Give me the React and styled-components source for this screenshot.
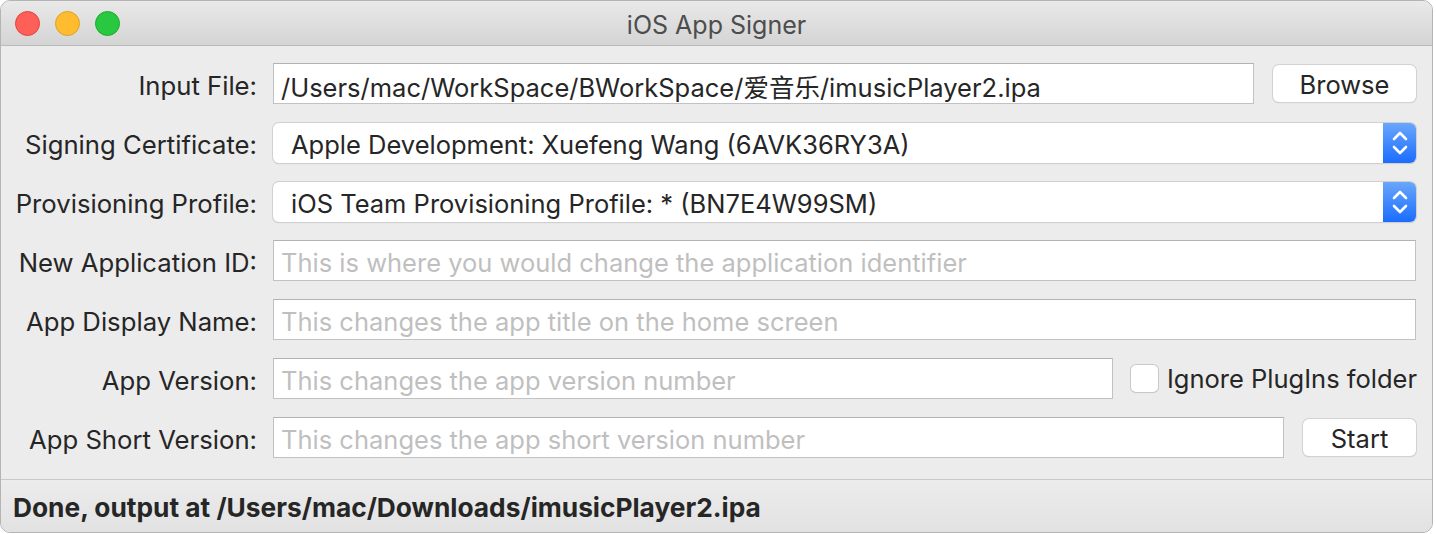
import styled, { createGlobalStyle } from "styled-components";

const GlobalStyle = createGlobalStyle`
  html, body {
    margin: 0;
    padding: 0;
    background: #ffffff;
  }
  * { box-sizing: border-box; }
`;

const FONT = `Inter, "Noto Sans", "Noto Sans CJK SC", sans-serif`;

const Window = styled.div`
  width: 1433px;
  height: 533px;
  border: 1px solid #b4b4b4;
  border-radius: 10px;
  overflow: hidden;
  background: #ececec;
  display: flex;
  flex-direction: column;
  font-family: ${FONT};
  color: #262626;
`;

const TitleBar = styled.div`
  height: 45px;
  flex-shrink: 0;
  display: flex;
  align-items: center;
  position: relative;
  background: linear-gradient(#e9e9e9, #d4d4d4);
  border-bottom: 1px solid #b9b9b9;
`;

const Lights = styled.div`
  display: flex;
  gap: 15px;
  padding-left: 14px;
`;

const Light = styled.span`
  width: 25px;
  height: 25px;
  border-radius: 50%;
  background: ${(p) => p.$bg};
  border: 1px solid ${(p) => p.$edge};
`;

const Title = styled.div`
  position: absolute;
  left: 0;
  right: 0;
  top: 9px;
  text-align: center;
  font-size: 25px;
  color: #4d4d4d;
  pointer-events: none;
`;

const Form = styled.div`
  flex: 1;
  display: flex;
  flex-direction: column;
  gap: 18px;
  padding: 17px 16px 0 0;
`;

const Row = styled.div`
  display: flex;
  align-items: center;
  height: 41px;
`;

const Label = styled.div`
  width: 256px;
  flex-shrink: 0;
  text-align: right;
  font-size: 25.7px;
  padding-top: 3px;
  margin-right: 16px;
  white-space: nowrap;
`;

const Field = styled.div`
  flex: ${(p) => (p.$width ? "none" : "1")};
  width: ${(p) => (p.$width ? p.$width + "px" : "auto")};
  height: 41px;
  background: #fff;
  border: 1px solid #c2c2c2;
  border-top-color: #b2b2b2;
  display: flex;
  align-items: center;
  padding: 3px 0 0 7px;
  font-size: 25.5px;
  white-space: nowrap;
  overflow: hidden;
  color: ${(p) => (p.$placeholder ? "#bfbfbf" : "#262626")};
`;

const Popup = styled.div`
  flex: 1;
  height: 40px;
  display: flex;
  background: #fff;
  border-radius: 6px;
  box-shadow: 0 0 0 1px #d0d0d0, 0 1px 1px rgba(0, 0, 0, 0.22);
  overflow: hidden;
`;

const PopupText = styled.div`
  flex: 1;
  display: flex;
  align-items: center;
  padding: 3px 0 0 18px;
  font-size: 25.5px;
  white-space: nowrap;
`;

const Stepper = styled.div`
  width: 33px;
  display: flex;
  align-items: center;
  justify-content: center;
  background: linear-gradient(#6aa6fb, #1a6dfd);
`;

const Button = styled.div`
  width: ${(p) => p.$width}px;
  height: 37px;
  margin-left: ${(p) => p.$gap}px;
  flex-shrink: 0;
  background: #fff;
  border-radius: 6px;
  box-shadow: 0 0 0 1px #d2d2d2, 0 1px 1px rgba(0, 0, 0, 0.22);
  display: flex;
  align-items: center;
  justify-content: center;
  padding-top: 2px;
  font-size: 25.5px;
`;

const Check = styled.label`
  display: flex;
  align-items: center;
  margin-left: 18px;
  font-size: 25.5px;
  white-space: nowrap;
`;

const Box = styled.span`
  width: 27px;
  height: 27px;
  margin-right: 9px;
  background: #fff;
  border-radius: 5px;
  box-shadow: 0 0 0 1px #c8c8c8, 0 1px 1px rgba(0, 0, 0, 0.12);
`;

const StatusBar = styled.div`
  height: 53px;
  flex-shrink: 0;
  border-top: 1px solid #c9c9c9;
  background: linear-gradient(#ececec, #e2e2e2);
  display: flex;
  align-items: center;
  padding: 3px 0 0 12px;
  font-size: 26.3px;
  font-weight: 700;
`;

const Chevrons = () => (
  <svg width="20" height="30" viewBox="0 0 20 30" fill="none" stroke="#fff" strokeWidth="2.6" strokeLinecap="round" strokeLinejoin="round">
    <path d="M4 11 L10 5 L16 11" />
    <path d="M4 19 L10 25 L16 19" />
  </svg>
);

const App = () => {
  return (
    <>
      <GlobalStyle />
      <Window>
        <TitleBar>
          <Lights>
            <Light $bg="#fe5f57" $edge="#e0443e" />
            <Light $bg="#febc2e" $edge="#dea123" />
            <Light $bg="#28c840" $edge="#1aab29" />
          </Lights>
          <Title>iOS App Signer</Title>
        </TitleBar>

        <Form>
          <Row>
            <Label>Input File:</Label>
            <Field>/Users/mac/WorkSpace/BWorkSpace/爱音乐/imusicPlayer2.ipa</Field>
            <Button $width={143} $gap={19}>Browse</Button>
          </Row>
          <Row>
            <Label>Signing Certificate:</Label>
            <Popup>
              <PopupText>Apple Development: Xuefeng Wang (6AVK36RY3A)</PopupText>
              <Stepper><Chevrons /></Stepper>
            </Popup>
          </Row>
          <Row>
            <Label>Provisioning Profile:</Label>
            <Popup>
              <PopupText>iOS Team Provisioning Profile: * (BN7E4W99SM)</PopupText>
              <Stepper><Chevrons /></Stepper>
            </Popup>
          </Row>
          <Row>
            <Label>New Application ID:</Label>
            <Field $placeholder>This is where you would change the application identifier</Field>
          </Row>
          <Row>
            <Label>App Display Name:</Label>
            <Field $placeholder>This changes the app title on the home screen</Field>
          </Row>
          <Row>
            <Label>App Version:</Label>
            <Field $placeholder $width={840}>This changes the app version number</Field>
            <Check>
              <Box />
              Ignore PlugIns folder
            </Check>
          </Row>
          <Row>
            <Label>App Short Version:</Label>
            <Field $placeholder>This changes the app short version number</Field>
            <Button $width={113} $gap={19}>Start</Button>
          </Row>
        </Form>

        <StatusBar>Done, output at /Users/mac/Downloads/imusicPlayer2.ipa</StatusBar>
      </Window>
    </>
  );
};

export default App;
